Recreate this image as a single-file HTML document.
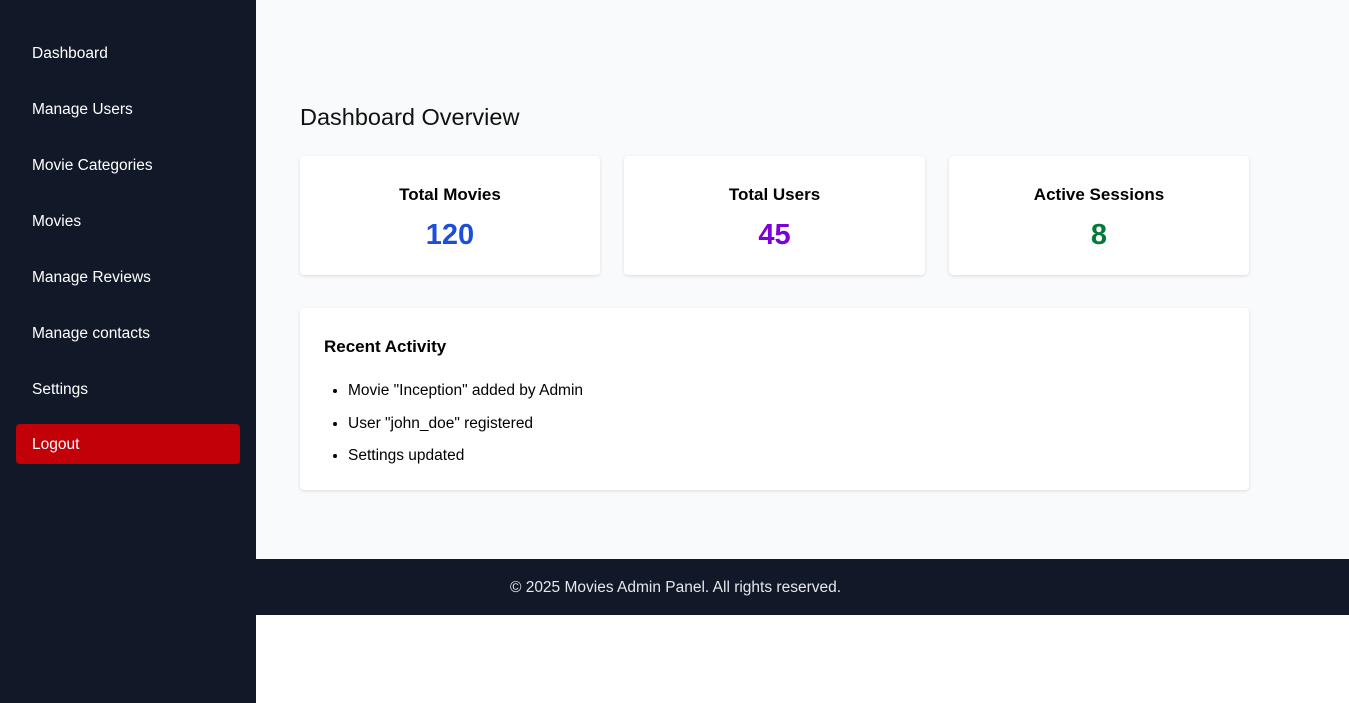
<!DOCTYPE html>
<html><head><meta charset="utf-8"><style>
*{box-sizing:border-box;margin:0;padding:0}
body{width:1349px;height:703px;background:#fff;font-family:"Liberation Sans",sans-serif;position:relative;overflow:hidden}
.side{position:absolute;left:0;top:0;width:256px;height:703px;background:#111827}
.side a{position:absolute;left:32px;color:#fff;font-size:15.5px;text-decoration:none;line-height:20px}
.logout{position:absolute;left:16px;top:424px;width:224px;height:40px;background:#c20008;border-radius:4px;color:#fff;font-size:15.5px;padding:11px 16px;line-height:20px}
.main{position:absolute;left:256px;top:0;width:1093px;height:559px;background:#f9fafb}
h1{position:absolute;left:300px;top:104px;font-size:23.5px;font-weight:normal;color:#111}
.card{position:absolute;top:156px;width:300px;height:119px;background:#fff;border-radius:4px;box-shadow:0 1px 3px rgba(0,0,0,.12);text-align:center}
.card .t{margin-top:29px;font-size:17px;font-weight:bold;color:#000}
.card .n{margin-top:14px;font-size:29px;font-weight:bold}
.act{position:absolute;left:300px;top:308px;width:949px;height:182px;background:#fff;border-radius:4px;box-shadow:0 1px 3px rgba(0,0,0,.12)}
.act h2{position:absolute;left:24px;top:29px;font-size:17px;font-weight:bold}
.act ul{position:absolute;left:48px;top:67px;font-size:15.5px;line-height:32.5px}
footer{position:absolute;left:256px;top:559px;width:1093px;height:56px;background:#111827;color:#e5e7eb;font-size:15.5px;text-align:center;line-height:58px;padding-right:254px}
</style></head><body>
<div class="side">
<a style="top:44px">Dashboard</a>
<a style="top:100px">Manage Users</a>
<a style="top:156px">Movie Categories</a>
<a style="top:212px">Movies</a>
<a style="top:268px">Manage Reviews</a>
<a style="top:324px">Manage contacts</a>
<a style="top:380px">Settings</a>
<div class="logout">Logout</div>
</div>
<div class="main"></div>
<h1>Dashboard Overview</h1>
<div class="card" style="left:300px"><div class="t">Total Movies</div><div class="n" style="color:#1d4ed8">120</div></div>
<div class="card" style="left:624px;width:301px"><div class="t">Total Users</div><div class="n" style="color:#7e00d6">45</div></div>
<div class="card" style="left:949px"><div class="t">Active Sessions</div><div class="n" style="color:#047a3a">8</div></div>
<div class="act"><h2>Recent Activity</h2><ul>
<li>Movie "Inception" added by Admin</li>
<li>User "john_doe" registered</li>
<li>Settings updated</li></ul></div>
<footer>© 2025 Movies Admin Panel. All rights reserved.</footer>
</body></html>
